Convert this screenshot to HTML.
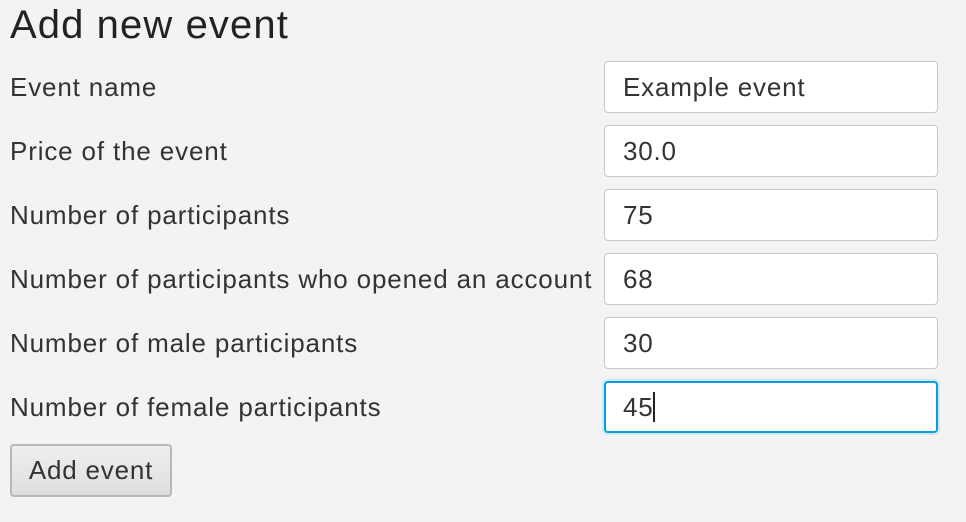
<!DOCTYPE html><html><head><style>
body{margin:0;width:966px;height:522px;background:#f3f3f3;font-family:"Liberation Sans",sans-serif;color:#333;position:relative;overflow:hidden}
.t{position:absolute;left:10px;top:3px;font-size:40px;letter-spacing:1.1px;color:#222}
.l{position:absolute;left:10px;font-size:26px;letter-spacing:0.85px;line-height:30px}
.f{position:absolute;left:604px;width:334px;height:52px;background:#fff;border:1px solid #c8c8c8;border-radius:4px;box-sizing:border-box;font-size:26px;letter-spacing:0.8px;line-height:50px;padding-left:18px;color:#333}
.fo{border:2px solid #0a9fd8;box-shadow:0 0 0 2px #cde9f5;padding-left:17px;line-height:48px}
.cur{display:inline-block;width:2px;height:30px;background:#222;vertical-align:middle;margin-top:-4px;margin-left:-1px}
.b{position:absolute;left:10px;top:444px;width:162px;height:53px;box-sizing:border-box;border:2px solid #b8b8b8;border-radius:4px;background:linear-gradient(#efefef,#dedede);font-size:26px;letter-spacing:0.8px;text-align:center;line-height:49px;color:#333}
</style></head><body>
<div class="t">Add new event</div>
<div class="l" style="top:72px">Event name</div>
<div class="l" style="top:136px">Price of the event</div>
<div class="l" style="top:200px">Number of participants</div>
<div class="l" style="top:264px">Number of participants who opened an account</div>
<div class="l" style="top:328px">Number of male participants</div>
<div class="l" style="top:392px">Number of female participants</div>
<div class="f" style="top:61px">Example event</div>
<div class="f" style="top:125px">30.0</div>
<div class="f" style="top:189px">75</div>
<div class="f" style="top:253px">68</div>
<div class="f" style="top:317px">30</div>
<div class="f fo" style="top:381px">45<span class="cur"></span></div>
<div class="b">Add event</div>
</body></html>
